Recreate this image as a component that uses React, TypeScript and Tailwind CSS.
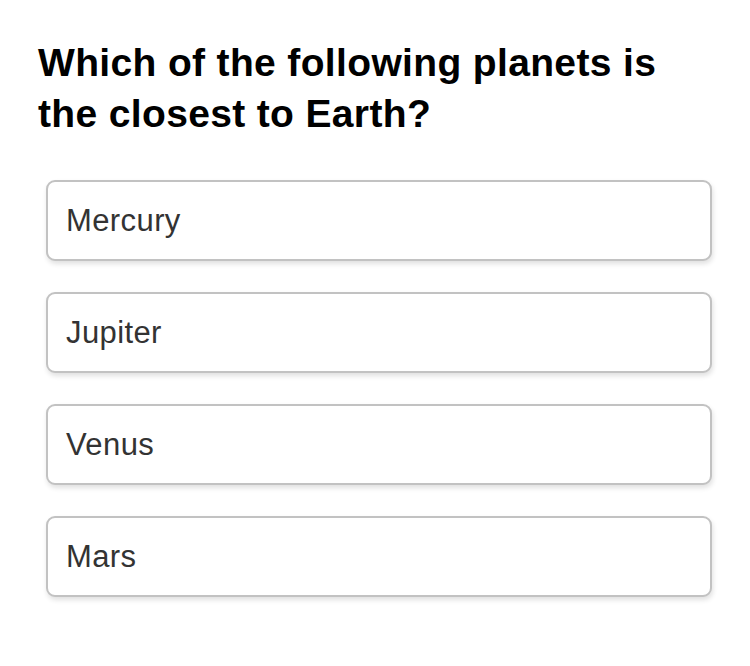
const options = ["Mercury", "Jupiter", "Venus", "Mars"];

export default function App() {
  return (
    <div
      className="min-h-[666px] w-[750px] bg-white pl-[38px] pr-[38px] pt-[37px]"
      style={{ fontFamily: '"Liberation Sans", Arial, sans-serif' }}
    >
      <h1 className="text-[39px] font-bold leading-[51px] tracking-[0.35px] text-black">
        Which of the following planets is the closest to Earth?
      </h1>

      <div className="mt-[41px] flex flex-col gap-[31px] pl-[8px]">
        {options.map((opt) => (
          <button
            key={opt}
            className="flex h-[81px] w-[666px] items-center rounded-[9px] border-2 border-[#c2c2c2] bg-white pl-[18px] pt-[2px] text-left text-[31px] tracking-[0.4px] text-[#333333] shadow-[1px_3px_5px_rgba(0,0,0,0.12)]"
          >
            {opt}
          </button>
        ))}
      </div>
    </div>
  );
}
